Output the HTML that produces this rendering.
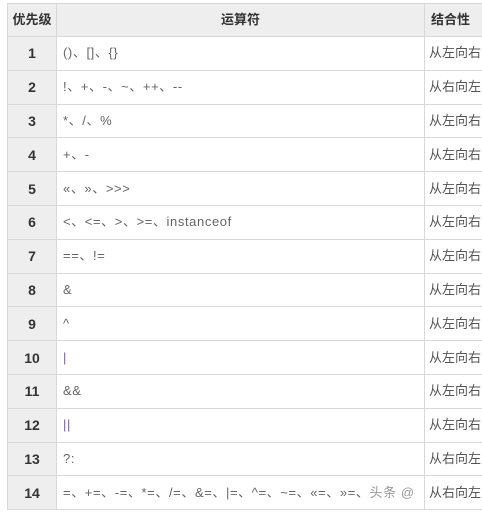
<!DOCTYPE html><html><head><meta charset="utf-8"><style>
body{margin:0;background:#fff;width:482px;height:518px;overflow:hidden;font-family:"Liberation Sans","Noto Sans CJK SC",sans-serif;}
table{position:absolute;left:7px;top:3px;border-collapse:collapse;width:490px;table-layout:fixed}
tr{height:33.8px}
tr.h{height:33px}
td,th{border:1px solid #d8d8d8;padding:0;font-size:13px;color:#666;line-height:16px;vertical-align:middle;white-space:nowrap;overflow:hidden}
th{background:#eee;color:#333;font-weight:bold}
td.n{background:#eee;text-align:center;font-weight:bold;color:#333;font-size:14px}
td.o{padding-left:6px;letter-spacing:0.6px}
td.a{padding-left:4px;color:#555}
.p{color:#7a5aa8}
</style></head><body>
<table>
<colgroup><col style="width:49px"><col style="width:368px"><col style="width:73px"></colgroup>
<tr class="h"><th>优先级</th><th>运算符</th><th style="text-align:left;padding-left:6px">结合性</th></tr>
<tr><td class="n">1</td><td class="o">()、[]、{}</td><td class="a">从左向右</td></tr>
<tr><td class="n">2</td><td class="o">!、+、-、~、++、--</td><td class="a">从右向左</td></tr>
<tr><td class="n">3</td><td class="o">*、/、%</td><td class="a">从左向右</td></tr>
<tr><td class="n">4</td><td class="o">+、-</td><td class="a">从左向右</td></tr>
<tr><td class="n">5</td><td class="o">«、»、&gt;&gt;&gt;</td><td class="a">从左向右</td></tr>
<tr><td class="n">6</td><td class="o">&lt;、&lt;=、&gt;、&gt;=、instanceof</td><td class="a">从左向右</td></tr>
<tr><td class="n">7</td><td class="o">==、!=</td><td class="a">从左向右</td></tr>
<tr><td class="n">8</td><td class="o">&amp;</td><td class="a">从左向右</td></tr>
<tr><td class="n">9</td><td class="o">^</td><td class="a">从左向右</td></tr>
<tr><td class="n">10</td><td class="o"><span class="p">|</span></td><td class="a">从左向右</td></tr>
<tr><td class="n">11</td><td class="o">&amp;&amp;</td><td class="a">从左向右</td></tr>
<tr><td class="n">12</td><td class="o"><span class="p">||</span></td><td class="a">从左向右</td></tr>
<tr><td class="n">13</td><td class="o">?:</td><td class="a">从右向左</td></tr>
<tr><td class="n">14</td><td class="o">=、+=、-=、*=、/=、&amp;=、|=、^=、~=、«=、»=、<span style="color:#999">头条 @</span></td><td class="a">从右向左</td></tr>
</table>
</body></html>
